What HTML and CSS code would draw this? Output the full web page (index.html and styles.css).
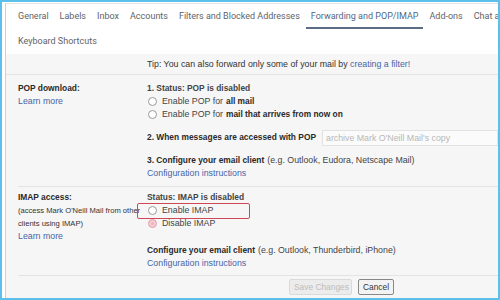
FILE: index.html
```html
<!DOCTYPE html>
<html lang="en">

<head>
  <meta charset="UTF-8" />
  <title>Settings - Forwarding and POP/IMAP</title>
  <link rel="stylesheet" href="styles.css">
</head>

<body>
  <div class="frame">
    <div class="page">

      <div class="tabs">
        <div class="tab-row">
          <span class="tab">General</span>
          <span class="tab">Labels</span>
          <span class="tab">Inbox</span>
          <span class="tab">Accounts</span>
          <span class="tab">Filters and Blocked Addresses</span>
          <span class="tab active">Forwarding and POP/IMAP</span>
          <span class="tab">Add-ons</span>
          <span class="tab">Chat and Meet</span>
        </div>
        <div class="tab-row second">
          <span class="tab">Keyboard Shortcuts</span>
        </div>
      </div>

      <div class="content">
        <div class="tip">Tip: You can also forward only some of your mail by <a class="link">creating a filter!</a></div>

        <div class="section pop">
          <div class="label">
            <div class="title">POP download:</div>
            <a class="link">Learn more</a>
          </div>
          <div class="opts">
            <div class="line bold">1. Status: POP is disabled</div>
            <div class="line"><span class="radio"></span>Enable POP for <b>all mail</b></div>
            <div class="line"><span class="radio"></span>Enable POP for <b>mail that arrives from now on</b></div>
            <div class="line step2"><b>2. When messages are accessed with POP</b><span class="select">archive Mark O'Neill Mail's copy</span></div>
            <div class="line step3"><b>3. Configure your email client</b> (e.g. Outlook, Eudora, Netscape Mail)</div>
            <div class="line"><a class="link">Configuration instructions</a></div>
          </div>
        </div>

        <div class="section imap">
          <div class="label">
            <div class="title">IMAP access:</div>
            <div class="note">(access Mark O'Neill Mail from other</div>
            <div class="note">clients using IMAP)</div>
            <a class="link">Learn more</a>
          </div>
          <div class="opts">
            <div class="line bold">Status: IMAP is disabled</div>
            <div class="line highlight"><span class="radio"></span>Enable IMAP</div>
            <div class="line"><span class="radio checked"></span>Disable IMAP</div>
            <div class="line step3"><b>Configure your email client</b> (e.g. Outlook, Thunderbird, iPhone)</div>
            <div class="line"><a class="link">Configuration instructions</a></div>
          </div>
        </div>

        <div class="buttons">
          <button class="btn" disabled>Save Changes</button>
          <button class="btn">Cancel</button>
        </div>
      </div>

    </div>
  </div>
</body>

</html>
```

FILE: styles.css
```css
body,
div,
p {
  margin: 0;
  padding: 0;
}

body {
  font-family: "Liberation Sans", Arial, sans-serif;
  color: #333;
  background: #fff;
}

.frame {
  width: 500px;
  height: 300px;
  box-sizing: border-box;
  border: 2px solid #5cc0ea;
  overflow: hidden;
}

.page {
  height: 100%;
  margin-left: 3px;
  margin-top: 1px;
  border-left: 1px solid #cfcfcf;
  border-top: 1px solid #e4e4e4;
  background: #f6f6f6;
}

/* tabs */
.tabs {
  background: #fff;
  padding: 6px 0 6px 12px;
  height: 38px;
}

.tab-row {
  display: flex;
  gap: 11px;
  white-space: nowrap;
}

.tab {
  font-family: Roboto, "Liberation Sans", sans-serif;
  font-size: 9px;
  line-height: 13px;
  color: #5f6368;
  padding-bottom: 4px;
  border-bottom: 2px solid transparent;
}

.tab.active {
  color: #4f6788;
  border-bottom-color: #5d6c86;
  padding: 0 5px 4px;
  margin: 0 -5px;
}

.tab-row.second {
  margin-top: 6px;
}

/* content */
.content {
  font-size: 8.8px;
  line-height: 13px;
}

.link {
  color: #4565a8;
}

.tip {
  padding: 4px 0 3px 141px;
  border-bottom: 1px solid #e3e3e3;
}

.section {
  display: grid;
  grid-template-columns: 129px 1fr;
  margin-left: 12px;
  border-bottom: 1px solid #e3e3e3;
}

.section.pop {
  padding: 7px 0 6px;
}

.section.imap {
  padding: 4px 0 5px;
}

.title,
.bold,
b {
  font-weight: bold;
  color: #2a2a2a;
  font-size: 8.4px;
}

.note {
  font-size: 7.6px;
  white-space: nowrap;
}

.opts {
  position: relative;
}

.line {
  display: flex;
  align-items: center;
  height: 13px;
  white-space: nowrap;
  color: #444;
}

.line b {
  margin: 0 3px;
}

.line.step2 b,
.line.step3 b {
  margin: 0 3px 0 0;
}

.line.step2 {
  margin-top: 10px;
}

.line.step3 {
  margin-top: 10px;
}

.imap .line.step3 {
  margin-top: 14px;
}

.radio {
  width: 7px;
  height: 7px;
  border: 1px solid #9a9a9a;
  border-radius: 50%;
  background: #fff;
  margin: 0 5px 0 1px;
  flex: none;
}

.radio.checked {
  border-color: #e6a3ad;
  background: #efb2bc;
  box-shadow: inset 0 0 0 2px #f6cdd3;
}

.select {
  height: 14px;
  flex: 1;
  margin-left: 3px;
  border: 1px solid #e2e2e2;
  background: #fbfbfb;
  color: #b8b8b8;
  padding-left: 3px;
  line-height: 14px;
}

.highlight::before {
  content: "";
  position: absolute;
  left: -10px;
  width: 111px;
  height: 14px;
  border: 1px solid #cf4858;
  border-radius: 2px;
}

.buttons {
  display: flex;
  gap: 6px;
  padding: 3px 0 0 283px;
}

.btn {
  font-family: "Liberation Sans", Arial, sans-serif;
  font-size: 8.4px;
  height: 16px;
  padding: 0 4px;
  border: 1px solid #888;
  border-radius: 2px;
  background: #f3f3f3;
  color: #333;
  white-space: nowrap;
}

.btn:disabled {
  border-color: #dadada;
  background: #ececec;
  color: #bdbdbd;
  width: 63px;
}
```
